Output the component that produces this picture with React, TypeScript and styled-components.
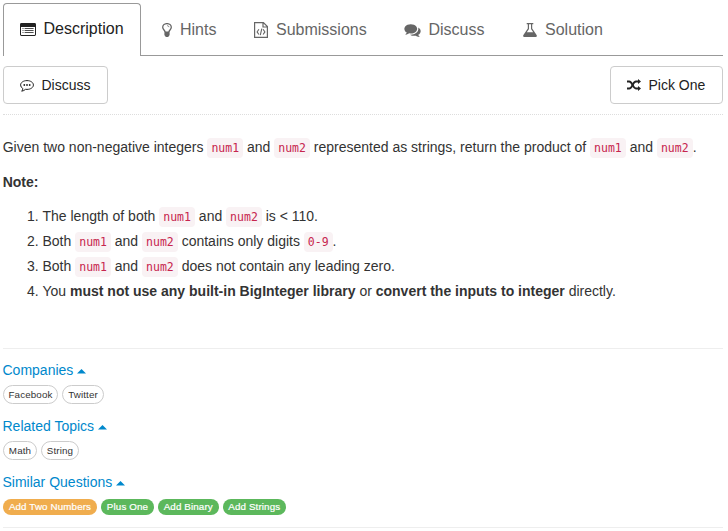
import React from 'react';
import styled, { createGlobalStyle, css } from 'styled-components';

const GlobalStyle = createGlobalStyle`
  * { box-sizing: border-box; }
  body {
    margin: 0;
    background: #fff;
    color: #333;
    font: 14px/20px "Liberation Sans", Arial, sans-serif;
  }
`;

const Page = styled.main`
  width: 728px;
  height: 531px;
  padding: 3px 5px 0 3px;
  overflow: hidden;
`;

const TabBar = styled.nav`
  display: flex;
  height: 53px;
`;

const Tab = styled.a<{ $active?: boolean; $width: number; $gap: number }>`
  display: flex;
  align-items: center;
  flex: none;
  width: ${p => p.$width}px;
  gap: ${p => p.$gap}px;
  padding: 1px 0 0 21px;
  font-size: 16px;
  color: #666;
  white-space: nowrap;
  border-bottom: 1px solid #999;
  ${p => p.$active && css`
    color: #222;
    padding: 0 0 2px 15.5px;
    border: 1px solid #999;
    border-bottom: 0;
    border-radius: 4px 4px 0 0;
  `}
`;

const TabFill = styled.div`
  flex: 1;
  border-bottom: 1px solid #999;
`;

const Toolbar = styled.div`
  display: flex;
  justify-content: space-between;
  height: 59px;
  padding-top: 10px;
  border-bottom: 1px dotted #ddd;
`;

const Button = styled.button<{ $width: number }>`
  display: flex;
  align-items: center;
  gap: 8px;
  width: ${p => p.$width}px;
  height: 38px;
  padding: 0 0 0 15.5px;
  border: 1px solid #ccc;
  border-radius: 4px;
  background: #fff;
  color: #222;
  font: inherit;
  white-space: nowrap;
`;

const Description = styled.section`
  height: 234px;
  padding-top: 20px;
  border-bottom: 1px solid #eee;
  line-height: 25px;
`;

const Paragraph = styled.p`
  margin: 0 0 10px;
  white-space: nowrap;
  text-indent: -0.3px;
`;

const Steps = styled.ol`
  margin: -1px 0 0;
  padding-left: 39.5px;
  white-space: nowrap;
`;

const Code = styled.code`
  padding: 3px 4px;
  border-radius: 4px;
  background: #f9f2f4;
  color: #c7254e;
  font: 11.5px/1 "DejaVu Sans Mono", monospace;
`;

const Details = styled.section`
  height: 179px;
  padding-top: 11px;
  border-bottom: 1px solid #eee;
`;

const Group = styled.div`
  height: 56px;
`;

const GroupTitle = styled.a`
  display: flex;
  align-items: center;
  gap: 4px;
  margin-left: -0.5px;
  color: #0088cc;
`;

const Caret = styled.svg`
  display: block;
  width: 9px;
  height: 5px;
  margin-top: 2px;
  fill: currentColor;
`;

const Tags = styled.div`
  display: flex;
  gap: 4px;
  padding-top: 5px;
`;

const Tag = styled.a<{ $width: number; $tone?: string }>`
  display: flex;
  align-items: center;
  justify-content: center;
  width: ${p => p.$width}px;
  height: ${p => (p.$tone ? 16 : 19)}px;
  margin-top: ${p => (p.$tone ? 2 : 0)}px;
  border: ${p => (p.$tone ? '0' : '1px solid #ccc')};
  border-radius: 10px;
  background: ${p => p.$tone || '#fff'};
  color: ${p => (p.$tone ? '#fff' : '#333')};
  font-size: 9.8px;
  letter-spacing: 0.12px;
  line-height: 12px;
  white-space: nowrap;
  ${p => p.$tone && css`
    -webkit-text-stroke: 0.2px currentColor;
  `}
`;

const Glyph = styled.svg`
  display: block;
  flex: none;
  fill: currentColor;
`;

const ListIcon = () => (
  <Glyph width="16" height="13" viewBox="0 0 16 13">
    <path fillRule="evenodd" d="M1.4 0h13.2A1.4 1.4 0 0 1 16 1.4v10.2a1.4 1.4 0 0 1-1.4 1.4H1.4A1.4 1.4 0 0 1 0 11.6V1.4A1.4 1.4 0 0 1 1.4 0zM1 4v7.6q0 .4.4.4h13.2q.4 0 .4-.4V4z" />
    <path d="M2.500 5h1v1h-1zM4.600 5h9v1h-9zM2.500 7h1v1h-1zM4.600 7h9v1h-9zM2.500 9h1v1h-1zM4.600 9h9v1h-9z" opacity=".8" />
  </Glyph>
);

const BulbIcon = () => (
  <Glyph width="10" height="14" viewBox="0 0 10 14">
    <path d="M3.1 9C3 7.2.7 6.6.7 4.3.7 2.1 2.8.6 5 .6s4.3 1.5 4.3 3.7C9.3 6.6 7 7.2 6.9 9" fill="none" stroke="currentColor" strokeWidth="1.3" />
    <path d="M2.4 8.5h5.2v3.6L6.2 14H3.800l-1.400-1.900z" />
    <path d="M5 2.6q1.9 0 2 1.6" fill="none" stroke="currentColor" strokeWidth=".7" />
  </Glyph>
);

const FileCodeIcon = () => (
  <Glyph width="14" height="16" viewBox="0 0 14 16">
    <g fill="none" stroke="currentColor">
      <path d="M.6.6h8.800l4 4v10.800H.6zM9 .6V5h4.400" strokeWidth="1.2" />
      <path d="M4.900 7.300 3.100 9.900l1.800 2.600M9.100 7.300l1.800 2.600-1.800 2.600M7.800 6.600l-1.500 6.600" strokeWidth="1.1" />
    </g>
  </Glyph>
);

const CommentsIcon = () => (
  <Glyph width="17" height="14" viewBox="0 0 1792 1536">
    <path d="M1408 640q0 139-94 257t-256.500 186.500-353.500 68.500q-86 0-176-16-124 88-278 128-36 9-86 16h-3q-11 0-20.500-8t-11.500-21q-1-3-1-6.500t.5-6.500 2-6l2.500-5 3.500-5.500 4-5 4.500-5 4-4.500q5-6 23-25t26-29.500 22.500-29 25-38.500 20.500-44q-124-72-195-177t-71-224q0-139 94-257t256.500-186.500 353.500-68.500 353.500 68.500 256.500 186.500 94 257zm384 256q0 120-71 224.500t-195 176.500q10 24 20.500 44t25 38.500 22.500 29 26 29.500 23 25q1 1 4 4.500t4.500 5 4 5 3.500 5.500l2.500 5 2 6 .5 6.500-1 6.500q-3 14-13 22t-22 7q-50-7-86-16-154-40-278-128-90 16-176 16-271 0-472-132 58 4 88 4 161 0 309-45t264-129q125-92 192-212t67-254q0-77-23-152 129 71 204 178t75 230z" />
  </Glyph>
);

const FlaskIcon = () => (
  <Glyph width="14" height="14" viewBox="0 0 14 14">
    <path fillRule="evenodd" d="M3.700 0h6.600v1.300H9.200v4.200l4.400 6.600q.8 1.500-.9 1.900H1.300Q-.4 13.600.4 12.100l4.400-6.600V1.300H3.700zM6 1.300v4.600L3.800 9.200h6.400L8 5.900V1.300z" />
  </Glyph>
);

const CommentDotsIcon = () => (
  <Glyph width="14" height="13" viewBox="0 -1 14 13">
    <path d="M7 .6c3.600 0 6.400 1.900 6.400 4.400S10.600 9.400 7 9.400l-1.500-.1Q4 10.800 1.700 11.200q1.100-1.100 1.200-2.600Q.6 7.300.6 5C.6 2.500 3.400.6 7 .6z" fill="none" stroke="currentColor" strokeWidth="1" />
    <circle cx="4.300" cy="5" r=".9" /><circle cx="7" cy="5" r=".9" /><circle cx="9.700" cy="5" r=".9" />
  </Glyph>
);

const ShuffleIcon = () => (
  <Glyph width="14" height="12" viewBox="0 0 14 12">
    <g fill="none" stroke="currentColor" strokeWidth="1.9">
      <path d="M0 2.500h2.200C5.600 2.500 5.500 9.500 9 9.500h2.500" />
      <path d="M0 9.500h2.200C5.600 9.500 5.500 2.500 9 2.500h2.500" />
    </g>
    <path d="M11 0l3 2.500L11 5zM11 7l3 2.500-3 2.500z" />
  </Glyph>
);

const ORANGE = '#f0ad4e';
const GREEN = '#5cb85c';

interface TagItem { label: string; width: number; tone?: string }

const groups: { title: string; tags: TagItem[] }[] = [
  { title: 'Companies', tags: [{ label: 'Facebook', width: 55 }, { label: 'Twitter', width: 42 }] },
  { title: 'Related Topics', tags: [{ label: 'Math', width: 34 }, { label: 'String', width: 38 }] },
  {
    title: 'Similar Questions',
    tags: [
      { label: 'Add Two Numbers', width: 94, tone: ORANGE },
      { label: 'Plus One', width: 53, tone: GREEN },
      { label: 'Add Binary', width: 60.5, tone: GREEN },
      { label: 'Add Strings', width: 63.5, tone: GREEN },
    ],
  },
];

export default function App() {
  return (
    <Page>
      <GlobalStyle />
      <TabBar>
        <Tab $active $width={138} $gap={8}><ListIcon />Description</Tab>
        <Tab $width={92} $gap={8}><BulbIcon />Hints</Tab>
        <Tab $width={150} $gap={8}><FileCodeIcon />Submissions</Tab>
        <Tab $width={119} $gap={7.5}><CommentsIcon />Discuss</Tab>
        <Tab $width={120} $gap={8}><FlaskIcon />Solution</Tab>
        <TabFill />
      </TabBar>
      <Toolbar>
        <Button $width={105}><CommentDotsIcon />Discuss</Button>
        <Button $width={113}><ShuffleIcon />Pick One</Button>
      </Toolbar>
      <Description>
        <Paragraph>
          Given two non-negative integers <Code>num1</Code> and <Code>num2</Code> represented as strings, return the product of <Code>num1</Code> and <Code>num2</Code>.
        </Paragraph>
        <Paragraph><b>Note:</b></Paragraph>
        <Steps>
          <li>The length of both <Code>num1</Code> and <Code>num2</Code> is &lt; 110.</li>
          <li>Both <Code>num1</Code> and <Code>num2</Code> contains only digits <Code>0-9</Code>.</li>
          <li>Both <Code>num1</Code> and <Code>num2</Code> does not contain any leading zero.</li>
          <li>You <b>must not use any built-in BigInteger library</b> or <b>convert the inputs to integer</b> directly.</li>
        </Steps>
      </Description>
      <Details>
        {groups.map(group => (
          <Group key={group.title}>
            <GroupTitle>
              {group.title}
              <Caret viewBox="0 0 9 5"><path d="M4.500 0 9 4.600H0z" /></Caret>
            </GroupTitle>
            <Tags>
              {group.tags.map(tag => (
                <Tag key={tag.label} $width={tag.width} $tone={tag.tone}>{tag.label}</Tag>
              ))}
            </Tags>
          </Group>
        ))}
      </Details>
    </Page>
  );
}
